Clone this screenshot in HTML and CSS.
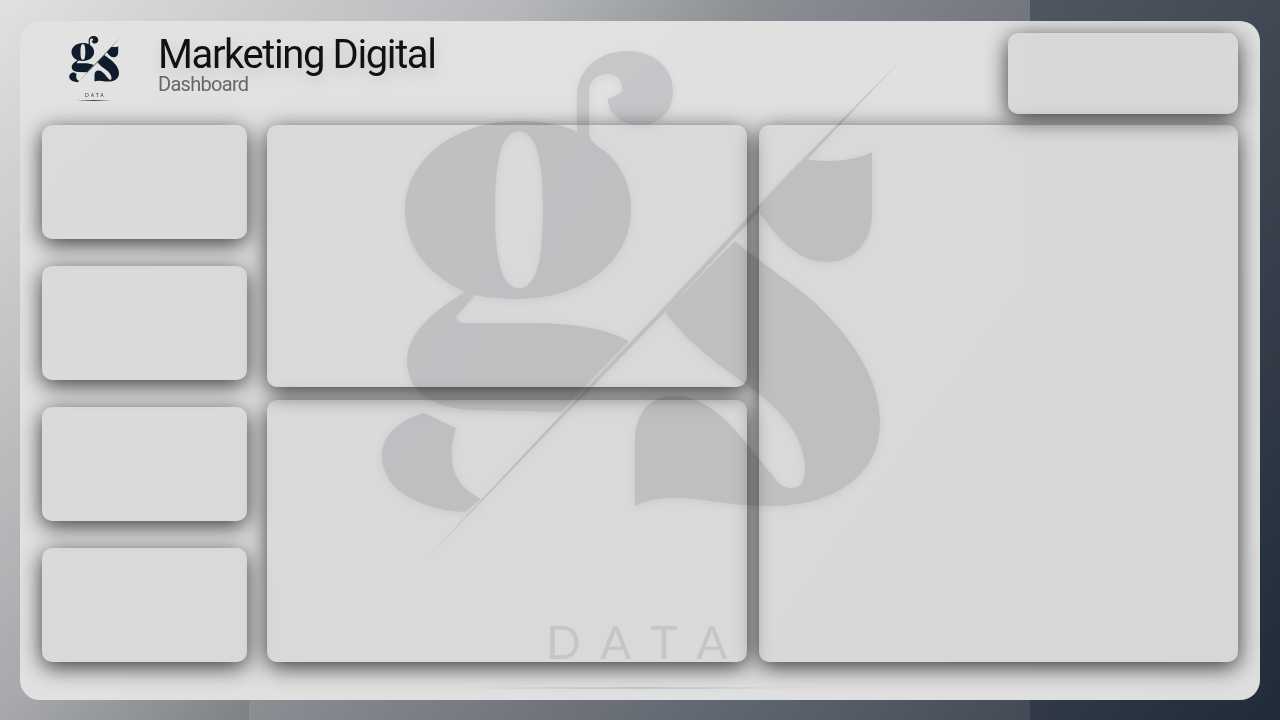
FILE: index.html
```html
<!DOCTYPE html>
<html>
<head>
    <title>Marketing Digital</title>
    <link rel="stylesheet" href="styles.css">
</head>
<body>
    <div class="band-left"></div>
    <div class="band-right"></div>

    <svg class="defs" width="0" height="0">
        <defs>
            <g id="gsMark">
                <path fill-rule="evenodd" d="M518 121C545 121 564 125 577 132L577 97C577 68 600 51 628 51C654 51 673 68 673 91C673 112 658 125 640 125C622 125 608 114 608 99C614 96 622 94 622 89C623 82 618 74 608 74C596 74 589 82 589 91L589 133C589 140 596 146 606 152C622 166 631 186 631 210C631 262 582 299 518 299C500 299 486 297 475 295L456 317C458 322 461 323 465 323L530 323C570 323 605 328 629 341L561 412L472 410C430 408 407 390 407 361C407 332 435 310 465 292C430 276 405 248 405 210C405 160 455 121 518 121ZM519 131C505 131 495 150 495 210C495 270 505 288 519 288C533 288 543 270 543 210C543 150 533 131 519 131Z"/>
                <path d="M424 413L456 428C452 442 451 450 452 459C453 478 464 490 481 499L465 512C420 510 382 490 382 456C382 434 400 420 424 413Z"/>
                <path d="M804 159C825 163 855 161 872 152L872 212C872 245 852 262 826 262C800 262 782 244 759 212Z"/>
                <path d="M735 241L665 312C690 345 720 366 747 385C785 412 805 440 805 470C805 483 800 488 791 488C783 488 777 482 773 476C750 448 735 428 722 417C705 403 692 396 675 396C650 396 635 412 635 442L635 506C650 498 668 497 686 498C710 500 735 506 770 506C835 506 880 475 880 422C880 385 860 345 812 300C790 282 755 258 735 241Z"/>
                <path d="M905 56L790 178L668 309L540 441L427 558L538 439L665 306L787 175Z"/>
            </g>
        </defs>
    </svg>

    <div class="panel">
        <svg class="watermark" viewBox="20 21 1240 679"><use href="#gsMark"/></svg>
        <div class="watermark-data">DATA</div>
        <div class="bottom-line"></div>

        <div class="header">
            <div class="logo">
                <svg class="logo-mark" viewBox="350 20 600 600"><use href="#gsMark"/></svg>
                <div class="logo-text">DATA</div>
                <div class="logo-line"></div>
            </div>
            <div class="titles">
                <h1 class="title">Marketing Digital</h1>
                <div class="subtitle">Dashboard</div>
            </div>
            <div class="card top-card"></div>
        </div>

        <div class="content">
            <div class="col-left">
                <div class="card"></div>
                <div class="card"></div>
                <div class="card"></div>
                <div class="card"></div>
            </div>
            <div class="col-middle">
                <div class="card"></div>
                <div class="card"></div>
            </div>
            <div class="card col-right"></div>
        </div>
    </div>
</body>
</html>
```

FILE: styles.css
```css
html, body {
    height: 100%;
}

body {
    margin: 0;
    padding: 21px 20px 20px;
    box-sizing: border-box;
    overflow: hidden;
    font-family: Roboto, "Liberation Sans", sans-serif;
    background: linear-gradient(126deg, #e0e1e1 0%, #b5b7ba 29%, #8c8f94 42%, #767a81 55%, #5c636d 71%, #454c57 85%, #2a3442 100%);
}

/* Vertical bands of the backdrop */
.band-left {
    position: fixed;
    top: 0;
    left: 0;
    bottom: 0;
    width: 249px;
    background: linear-gradient(180deg, rgba(0, 0, 0, 0) 0%, rgba(0, 0, 0, 0.08) 100%);
}

.band-right {
    position: fixed;
    top: 0;
    right: 0;
    bottom: 0;
    width: 250px;
    background: rgba(15, 25, 40, 0.35);
}

.defs {
    position: absolute;
}

.panel {
    position: relative;
    height: 679px;
    padding: 12px 22px 38px;
    box-sizing: border-box;
    border-radius: 20px;
    overflow: hidden;
    background-color: rgba(226, 226, 226, 0.985);
}

/* Big faded logo behind the cards */
.watermark {
    position: absolute;
    top: 0;
    left: 0;
    width: 1240px;
    height: 679px;
    fill: #5c626a;
    opacity: 0.2;
    filter: drop-shadow(0 2px 4px rgba(0, 0, 0, 0.3));
}

.watermark-data {
    position: absolute;
    left: 526px;
    top: 594px;
    font-family: Lato, sans-serif;
    font-size: 46px;
    line-height: 54px;
    letter-spacing: 19px;
    font-kerning: none;
    color: #cbcdcf;
}

.bottom-line {
    position: absolute;
    left: 440px;
    top: 666px;
    width: 360px;
    height: 2px;
    background: linear-gradient(90deg, rgba(190, 195, 200, 0), #c4c8cc 50%, rgba(190, 195, 200, 0));
}

.header {
    position: relative;
    display: flex;
    height: 81px;
    margin-bottom: 11px;
}

.logo {
    width: 116px;
    flex-shrink: 0;
}

.logo-mark {
    display: block;
    width: 60px;
    height: 60px;
    margin-left: 24px;
    fill: #0f1c2b;
}

.logo-text {
    margin-top: -1px;
    margin-left: 43px;
    font-family: Lato, sans-serif;
    font-size: 5px;
    line-height: 7px;
    letter-spacing: 2px;
    color: #333;
}

.logo-line {
    width: 36px;
    height: 1px;
    margin-top: 1px;
    margin-left: 34px;
    background: linear-gradient(90deg, rgba(40, 50, 60, 0), #39424c 50%, rgba(40, 50, 60, 0));
}

.titles {
    padding-top: 2px;
}

.title {
    margin: 0;
    font-size: 40px;
    font-weight: 400;
    line-height: 40px;
    letter-spacing: -1.4px;
    color: #111;
    text-shadow: 0 6px 16px rgba(0, 0, 0, 0.12);
}

.subtitle {
    font-size: 20px;
    font-weight: 400;
    line-height: 18px;
    letter-spacing: -0.7px;
    color: #666;
}

.card {
    position: relative;
    border-radius: 10px;
    background-color: rgba(0, 0, 0, 0.03);
    box-shadow: 0 5px 22px rgba(0, 0, 0, 0.75);
}

.top-card {
    width: 230px;
    margin-left: auto;
}

.content {
    position: relative;
    display: flex;
    height: 537px;
}

.col-left {
    display: flex;
    flex-direction: column;
    justify-content: space-between;
    width: 205px;
    margin-right: 20px;
}

.col-left .card {
    height: 114px;
}

.col-middle {
    display: grid;
    grid-template-rows: 262px 262px;
    gap: 13px;
    width: 480px;
    margin-right: 12px;
}

.col-right {
    width: 479px;
}
```
